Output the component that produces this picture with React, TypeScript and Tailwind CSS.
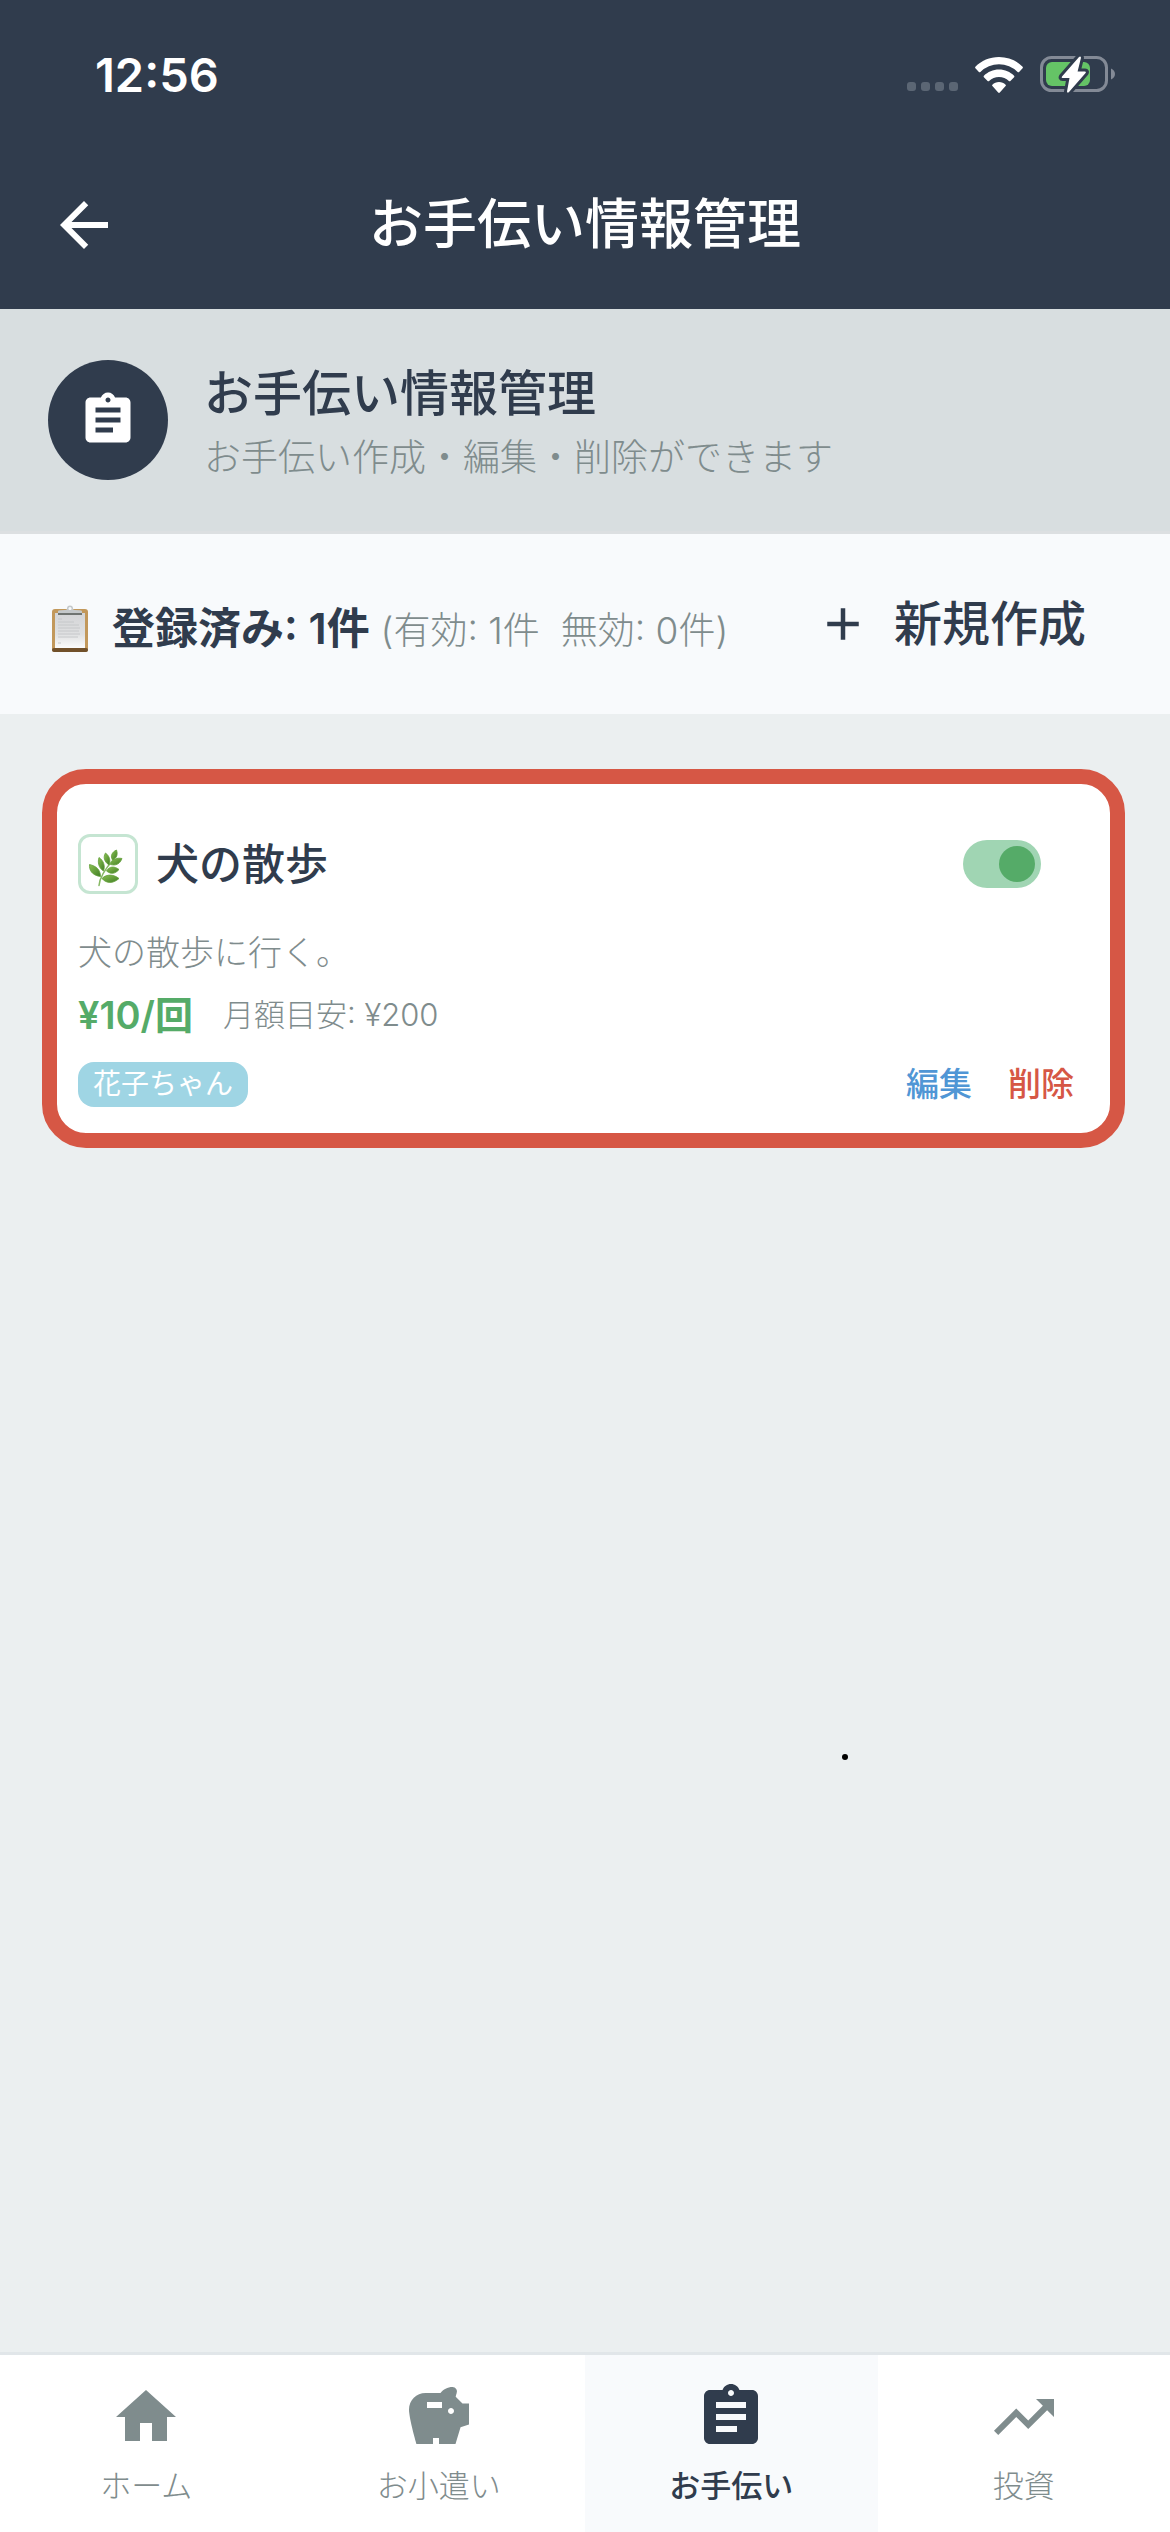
import { useState } from "react";
import { MdAdd, MdArrowBack, MdAssignment, MdHome, MdSavings, MdTrendingUp } from "react-icons/md";

const tabs = [
  { label: "ホーム", icon: MdHome, active: false },
  { label: "お小遣い", icon: MdSavings, active: false },
  { label: "お手伝い", icon: MdAssignment, active: true },
  { label: "投資", icon: MdTrendingUp, active: false },
];

function WifiIcon() {
  return (
    <svg viewBox="0 0 48 36" className="h-9 w-12" fill="#fff" aria-hidden="true">
      <path d="M24 0C33.300 0 41.700 3.600 47.600 9.800Q48.300 10.600 47.600 11.300L44.100 14.900Q43.400 15.600 42.600 14.900A26.500 26.500 0 0 0 5.400 14.900Q4.600 15.600 3.900 14.900L0.400 11.300Q-0.300 10.600 0.400 9.800C6.300 3.600 14.700 0 24 0Z" />
      <path d="M24 12.600C30 12.600 35.200 15 39.100 18.800Q39.800 19.500 39.100 20.200L35.400 23.900Q34.700 24.600 33.900 23.900A14.500 14.500 0 0 0 14.100 23.900Q13.300 24.600 12.600 23.900L8.900 20.200Q8.200 19.500 8.900 18.800C12.800 15 18 12.600 24 12.600Z" />
      <path d="M24 25C26.600 25 28.900 26 30.600 27.700Q31.200 28.400 30.600 29L24.800 35.500Q24 36.300 23.200 35.500L17.400 29Q16.800 28.400 17.400 27.700C19.100 26 21.400 25 24 25Z" />
    </svg>
  );
}

function BatteryIcon() {
  const bolt = "M39 1L22 20.500Q21 22 22.600 22H29.500L27 35.500Q27.200 37.400 28.800 36.200L45.600 17Q46.600 15.500 45 15.500H37.600L41 1.800Q40.600 -0.400 39 1Z";
  return (
    <svg viewBox="0 -1 76 39" className="h-[39px] w-[76px]" aria-hidden="true">
      <rect x="1.500" y="1.500" width="65" height="33" rx="10" fill="none" stroke="#838a96" strokeWidth="3" />
      <path d="M71 12.500C73.500 13.500 75 15.500 75 18S73.500 22.500 71 23.500Z" fill="#838a96" />
      <rect x="6" y="6" width="44" height="24" rx="6" fill="#65c466" />
      <path d={bolt} fill="#fff" stroke="#303c4d" strokeWidth="6" strokeLinejoin="round" />
      <path d={bolt} fill="#fff" />
    </svg>
  );
}

function ClipboardIcon() {
  return (
    <svg viewBox="0 0 36 48" className="h-12 w-9" aria-hidden="true">
      <defs>
        <linearGradient id="paper" x1="0" y1="0" x2="0" y2="1">
          <stop offset="0" stopColor="#d4d5d7" />
          <stop offset="0.600" stopColor="#dfe0e1" />
          <stop offset="1" stopColor="#fbfbfb" />
        </linearGradient>
      </defs>
      <rect x="0" y="4" width="36" height="43" rx="3" fill="#c2985b" />
      <rect x="0" y="43" width="36" height="4" rx="2" fill="#71502a" />
      <rect x="3" y="8" width="30" height="35" fill="url(#paper)" />
      <rect x="6" y="7" width="24" height="3" fill="#6f7471" />
      <path d="M6 8V6Q7 5 13 5Q15 5 15 3.500A3 3 0 0 1 21 3.500Q21 5 23 5Q29 5 30 6V8Z" fill="#c4c8ca" />
      <circle cx="18" cy="3.500" r="1.500" fill="#f8fafc" />
      <path d="M6 14H10M6 17H22M6 20H27M6 23H28M6 26H27M6 29H28M6 32H26M6 38H9" stroke="#c6c8ca" strokeWidth="1" />
    </svg>
  );
}

function HerbIcon() {
  return (
    <svg viewBox="0 0 36 38" className="h-[38px] w-9" aria-hidden="true">
      <defs>
        <linearGradient id="leaf" x1="0" y1="0" x2="1" y2="1">
          <stop offset="0" stopColor="#8cc152" />
          <stop offset="1" stopColor="#3f7d25" />
        </linearGradient>
      </defs>
      <path d="M11 36.500C11.500 30 17 20 25.500 10.500" fill="none" stroke="#86b864" strokeWidth="1.500" strokeLinecap="round" />
      <g fill="url(#leaf)" stroke="#62a03a" strokeWidth="0.800" strokeLinejoin="round">
        <path d="M12.500 27.500C4 26.500 1 21 1.500 15.500C8 17 12.500 20.500 12.500 27.500Z" />
        <path d="M15.500 22C10.500 19 9.500 13 11 8.500C15.500 11.500 17.500 17 15.500 22Z" />
        <path d="M21 16C16 12.500 15 8 17.500 4C21.500 7 23 11.500 21 16Z" />
        <path d="M24.500 11C22 7 24 3 28.500 1C30 5.500 29 9 24.500 11Z" />
        <path d="M22.500 15.500C24.500 10 29 8.500 34 9.500C32 15 28 17 22.500 15.500Z" />
        <path d="M18.500 22C21.500 17 26.500 17 31 20.500C27 25 23 25.500 18.500 22Z" />
        <path d="M14 29.500C19 24.500 26 25.500 31 29.500C25 35 18 34.500 14 29.500Z" />
      </g>
    </svg>
  );
}

function StatusBar() {
  return (
    <div className="flex h-[141px] items-center justify-between pt-2 pr-[54px] pl-[95px]">
      <span className="text-[47px] leading-none font-semibold">12:56</span>
      <div className="flex items-center">
        <div className="mr-[17px] flex gap-[5px] pt-6">
          {[0, 1, 2, 3].map((i) => (
            <span key={i} className="size-[9px] rounded-[3px] bg-[#5b6674]" />
          ))}
        </div>
        <WifiIcon />
        <div className="ml-[17px]">
          <BatteryIcon />
        </div>
      </div>
    </div>
  );
}

function ChoreCard() {
  const [enabled, setEnabled] = useState(true);
  return (
    <article className="mr-[45px] ml-[42px] rounded-[44px] border-[15px] border-[#d65745] bg-white px-[21px] pt-[50px] pb-[26px]">
      <div className="flex items-center">
        <span className="flex size-[60px] items-center justify-center rounded-xl border-[3px] border-[#c5e5d2] pt-2 pr-1">
          <HerbIcon />
        </span>
        <h3 className="ml-[18px] flex-1 text-[43px] leading-[60px] font-medium">犬の散歩</h3>
        <label className="mr-12 cursor-pointer">
          <input
            type="checkbox"
            role="switch"
            aria-label="犬の散歩を有効にする"
            checked={enabled}
            onChange={(e) => setEnabled(e.target.checked)}
            className="peer sr-only"
          />
          <span className="flex h-12 w-[78px] items-center rounded-full bg-gray-300 p-1.5 peer-checked:justify-end peer-checked:bg-[#a0d5b3]">
            <span className="size-9 rounded-full bg-[#55ab68]" />
          </span>
        </label>
      </div>
      <p className="mt-8 text-[34px] leading-[54px] font-light text-[#7f8c8d]">犬の散歩に行く。</p>
      <div className="mt-2 flex items-center gap-[30px] leading-[54px]">
        <span className="text-[38px] font-semibold text-[#55ab68]">¥10/回</span>
        <span className="text-[31px] font-light text-[#7f8c8d]">月額目安: ¥200</span>
      </div>
      <div className="mt-5 flex items-center">
        <span className="rounded-2xl bg-[#9fd5e4] px-[15px] text-[28px] leading-[45px] text-white">花子ちゃん</span>
        <div className="mr-[15px] ml-auto flex gap-9 text-[33px] leading-[45px] font-medium">
          <button className="cursor-pointer text-[#5096d5]">編集</button>
          <button className="cursor-pointer text-[#d65745]">削除</button>
        </div>
      </div>
    </article>
  );
}

export default function App() {
  return (
    <div className="flex min-h-screen flex-col bg-[#ebeff0] font-[Inter,'Noto_Sans_CJK_JP',sans-serif] text-[#303c4d]">
      <header className="bg-[#303c4d] text-white">
        <StatusBar />
        <div className="grid h-[168px] grid-cols-[120px_1fr_120px] items-center">
          <button aria-label="戻る" className="ml-12 cursor-pointer">
            <MdArrowBack className="size-[72px]" />
          </button>
          <h1 className="text-center text-[54px] leading-[72px] font-medium">お手伝い情報管理</h1>
        </div>
      </header>

      <section className="flex h-[225px] items-center gap-9 border-b-[3px] border-[#dcdfe1] bg-[#d8dee0] px-12">
        <span className="flex size-[120px] items-center justify-center rounded-full bg-[#303c4d] text-white">
          <MdAssignment className="size-[60px]" />
        </span>
        <div className="pt-1">
          <h2 className="text-[49px] leading-[72px] font-medium">お手伝い情報管理</h2>
          <p className="text-[37px] leading-[56px] font-light text-[#7f8c8d]">お手伝い作成・編集・削除ができます</p>
        </div>
      </section>

      <section className="flex h-[180px] items-center justify-between bg-[#f8fafc] pr-[84px] pl-[52px]">
        <div className="flex items-center pt-2.5">
          <ClipboardIcon />
          <p className="ml-6 text-[43px] leading-[60px] font-semibold">
            登録済み: 1件{" "}
            <span className="text-[37px] font-light whitespace-pre text-[#7f8c8d]">(有効: 1件  無効: 0件)</span>
          </p>
        </div>
        <button className="flex cursor-pointer items-center gap-6 text-[48px] leading-[72px] font-medium">
          <MdAdd className="size-[54px]" />
          新規作成
        </button>
      </section>

      <main className="relative flex-1 pt-[55px]">
        <ChoreCard />
        <span className="absolute top-[1040px] left-[72%] size-1.5 rounded-full bg-black" />
      </main>

      <nav className="grid grid-cols-4 border-t-[3px] border-[#e1e6e9] bg-white">
        {tabs.map(({ label, icon: Icon, active }) => (
          <a
            key={label}
            href="#"
            aria-current={active ? "page" : undefined}
            className={
              active
                ? "flex h-[177px] flex-col items-center bg-[#f8fafc] pt-[26px] font-medium"
                : "flex h-[177px] flex-col items-center pt-[26px] font-light text-[#7f8c8d]"
            }
          >
            <Icon className="size-[72px]" />
            <span className="mt-3 text-[31px] leading-[42px]">{label}</span>
          </a>
        ))}
      </nav>
    </div>
  );
}
